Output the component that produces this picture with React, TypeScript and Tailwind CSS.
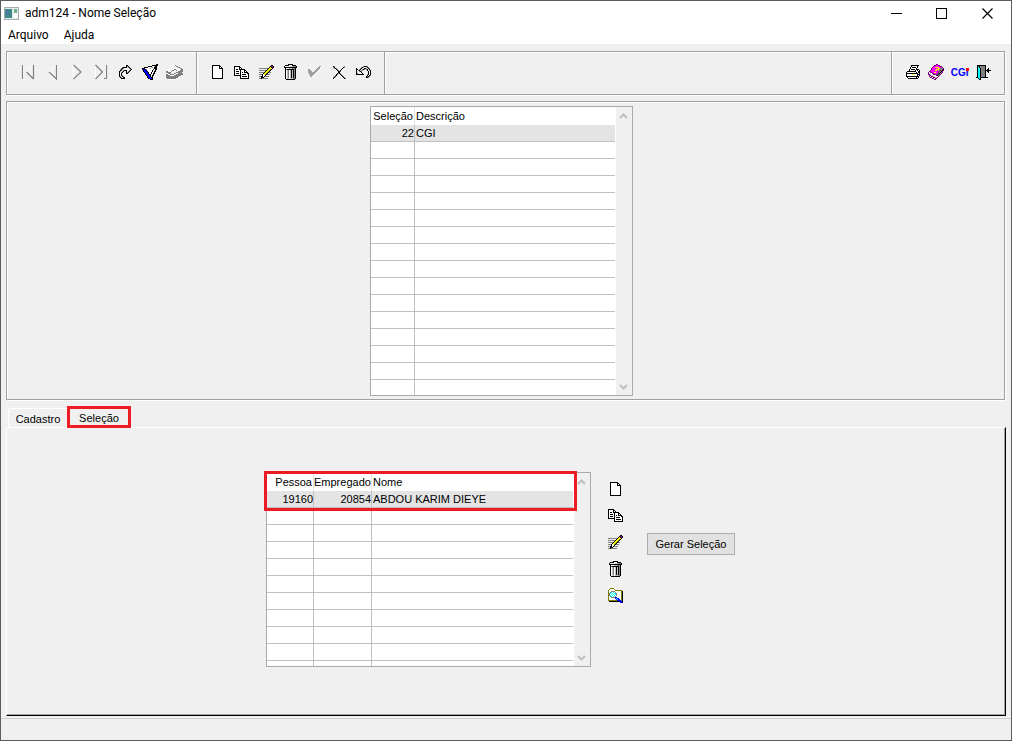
import clsx from 'clsx';
import { ReactNode } from 'react';

const palette: Record<string, string> = {
  K: '#000000',
  W: '#ffffff',
  G: '#808080',
  S: '#a0a0a0',
  L: '#c0c0c0',
  Y: '#ffff00',
  O: '#808000',
  M: '#ff00ff',
  P: '#800080',
  C: '#00ffff',
  B: '#0000ff',
  N: '#000080',
  T: '#008080',
  R: '#ff0000',
};

const newIcon = [
  'KKKKKKKK...',
  'KWWWWWWKK..',
  'KWWWWWWKWK.',
  'KWWWWWWKKKK',
  'KWWWWWWWWWK',
  'KWWWWWWWWWK',
  'KWWWWWWWWWK',
  'KWWWWWWWWWK',
  'KWWWWWWWWWK',
  'KWWWWWWWWWK',
  'KWWWWWWWWWK',
  'KWWWWWWWWWK',
  'KWWWWWWWWWK',
  'KKKKKKKKKKK',
];

const copyIcon = [
  'KKKKKK.........',
  'KWWWWKK........',
  'KWWWWKWK.......',
  'KWKKWKKKKKK....',
  'KWWWWWKWWWKK...',
  'KWKKKWKWWWKWK..',
  'KWWWWWKWKWKKKK.',
  'KWKKKWKWWWWWWKK',
  'KWWWWWKWKKKKWWK',
  'KKKKKKKWWWWWWWK',
  '......KWKKKKKWK',
  '......KWWWWWWWK',
  '......KKKKKKKKK',
];

const editIcon = [
  '............KK.',
  '...........KPPK',
  '..........KYKPK',
  'GGGGGGGGGKYYYK.',
  '........KYYOK..',
  'GGGGGGGKYYOK...',
  '......KYYOK....',
  'GGGGGKYYOKGG...',
  '....KYYOK......',
  'GGGKWYOKGGG....',
  '...KWWK........',
  'GGKKWKGGGG.....',
  '..KKK..........',
  'GGKGGGGGG......',
];

const trashIcon = [
  '....KKKKK....',
  '.KKKKWWWKKKK.',
  'KWWWWWLLLGGGK',
  'KKKKKKKKKKKKK',
  '.KWWWLLLGGGK.',
  '.KGKKKKKKKGK.',
  '.KWLGWLKLKGK.',
  '.KWLGWLKLKGK.',
  '.KWLGWLKLKGK.',
  '.KWLGWLKLKGK.',
  '.KWLGWLKLKGK.',
  '.KWLGWLKLKGK.',
  '.KWLGWLKLKGK.',
  '.KWLGWLKLKGK.',
  '.KWLLWLLLGGK.',
  '..KKKKKKKKK..',
];

const confirmIcon = [
  '...........SSW',
  '..........SSW.',
  '.........SSSW.',
  'SS......SSSW..',
  'SSS....SSSW...',
  'SSSS..SSSW....',
  'SSSSSSSSW.....',
  '.SSSSSSW......',
  '.SSSSSW.......',
  '..SSSW........',
  '..SSW.........',
  '...W..........',
];

const cancelIcon = [
  'KG.........G.',
  'GK........KG.',
  '.GKG.....K...',
  '...KG...K....',
  '....KG.K.....',
  '.....KKG.....',
  '.....KK......',
  '....KGKG.....',
  '...KG..KG....',
  '..GK....KG...',
  '.GK......KG..',
  'GK........KG.',
  'K..........KG',
];

const undoIcon = [
  '.......GKKKG...',
  '.....GKG...KG..',
  'K...GK..KKG.KG.',
  'KK.GK.GKG.GK.K.',
  'K.GK.GG....K.GK',
  'K..GKG......K.K',
  'K....K......K.K',
  'KG....K.....K.K',
  'KKKKKKKK...GK.K',
  '...........K.KG',
  '..........KGKG.',
  '..........KKG..',
];

const redoIcon = [
  '.......KK.....',
  '.......KGK....',
  '...GKKKK.GK...',
  '..GKG.....GK..',
  '.GKG.......GK.',
  '.KG.GKKK..GK..',
  'KG.GK..K.GK...',
  'K.GK...KGK....',
  'K.K....KK.....',
  'K.K...........',
  'K.KG..........',
  'KG.KG.........',
  '.KG.KK........',
  '..KKKK........',
];

const filterIcon = [
  '..............KK',
  '..........KKKKKK',
  '......KKKKWWLKK.',
  '..KKKKWWWLGWKKK.',
  'KKKWWWWLLWWWKKK.',
  'KBBKGWWWWWWKWKK.',
  '.KBBKWWWWWKWLK..',
  '.KBBBKWWWWKWKK..',
  '..KBBBKWWKWLK...',
  '...KBBKWWKWKK...',
  '...KBBBKKWLK....',
  '....KBBBKWKK....',
  '.....KBBKLK.....',
  '.....KBBBKK.....',
  '......KBBBK.....',
  '........KKK.....',
];

const lookupIcon = [
  '........WG.......',
  '......WW..GG.....',
  '.....W......GG...',
  '...WW...WW....GG.',
  '..W...WWGGW....GG',
  '.W...WGG..GW..GGG',
  'GGW.WG......GGGGG',
  'GGGGG.....GGGGGGW',
  'WWGGG...GGWWGGGGG',
  'GGWWGGGGWWGGGGGGG',
  'GGGGWWWWGGGGGGGW.',
  'GGGGGGGGGGGGGW...',
  'GGGGGGGGGGGGW....',
  '.GGGGGGGGGW......',
  '..WWWWWWWW.......',
];

const printIcon = [
  '.....KKKKKKKK.',
  '.....KWWWWWK..',
  '....KWKKKKWK..',
  '....KWWWWWK...',
  '...KWKKKKWKKK.',
  '...KWWWWWKWKWK',
  '.KKKKKKKKKWWKK',
  'KWWWWWWWWWKWKK',
  'KKKKKKKKKKKKWK',
  'KWWWWWYYWWWKKK',
  'KWWWWWWWWWWKWK',
  'KKKKKKKKKKKKK.',
  '.KWWWWWWWWKWK.',
  '..KKKKKKKKKK..',
];

const helpIcon = [
  '........PP......',
  '......PPMMPP....',
  '.....PMMMMMMPP..',
  '....PMMYYYYMMGP.',
  '...PMMMMMMYYGGGP',
  '...PMMMMYYYGGGPK',
  '..PMMMMYYMGGPGKP',
  '.PPMMMMMMMGPGKP.',
  'PWPPMMYYMMPGKGP.',
  'PWWWPPMMMPGKGP..',
  'PPLWWPPPPGKGP...',
  '.PPLLWWWPKGP....',
  '.PWPPLLWWWP.....',
  '..PPWPPLLP......',
  '....PPWPP.......',
  '......PP........',
];

const exitIcon = [
  '.KKKKKKKKK.....',
  '.KTKGGGGGK.....',
  '.KCKGGGGGK.....',
  '.KCCKGGGGK..K..',
  '.KCCKGGGGK.KK..',
  '.KCCKGGGGKKKKKK',
  '.KCCKGGGGK.KK..',
  '.KCCKGGGGK..K..',
  '.KCCKGGGGK.....',
  '.KCCKGGGGK.....',
  '.KCCKGGGGK.....',
  '.KCCKGGGGK.....',
  'KKCCKKKKKKKK...',
  '..KCK..........',
  '...KK..........',
];

const searchIcon = [
  '..OOOO.........',
  '.OWWWWO........',
  'OWWWWWWOOOOOOO.',
  'OWWGGGGWWWWWWOK',
  'OWGCWCWGWWWWWOK',
  'OGCWCWCCGWWWWOK',
  'OGWCWCWCGWWWWOK',
  'OGCWCWCWGWWWWOK',
  'OWGCWCWGWWWWWOK',
  'OWWGGGGBBWWWWOK',
  'OWWWWWWBCBBWWOK',
  'OWWWWWWWBCBBWOK',
  'OOOOOOOOOBBBBOK',
  '.KKKKKKKKKKBBBK',
  '............BBN',
];

function PixelIcon({ rows }: { rows: string[] }) {
  const width = Math.max(...rows.map((x) => x.length));
  return (
    <svg
      className="shrink-0"
      width={width}
      height={rows.length}
      viewBox={`0 0 ${width} ${rows.length}`}
      shapeRendering="crispEdges"
      aria-hidden="true"
    >
      {rows.map((row, y) =>
        row
          .split('')
          .map((c, x) =>
            palette[c] ? (
              <rect
                key={`${x}-${y}`}
                x={x}
                y={y}
                width="1"
                height="1"
                fill={palette[c]}
              />
            ) : null,
          ),
      )}
    </svg>
  );
}

// Gray arrow with a white edge, as disabled toolbar buttons have
function NavIcon({ gray, white }: { gray: string; white: string }) {
  return (
    <svg width="14" height="16" viewBox="0 0 14 16" fill="none">
      <path d={white} stroke="#ffffff" />
      <path d={gray} stroke="#808080" strokeWidth="1.2" />
    </svg>
  );
}

function ToolButton({
  label,
  disabled,
  className,
  children,
}: {
  label: string;
  disabled?: boolean;
  className?: string;
  children: ReactNode;
}) {
  return (
    <button
      type="button"
      aria-label={label}
      disabled={disabled}
      className={clsx('flex items-center justify-center', className ?? 'h-6')}
    >
      {children}
    </button>
  );
}

function ScrollBar() {
  return (
    <div className="flex w-4 shrink-0 flex-col items-center justify-between bg-[#f0f0f0] py-1 pr-[2px]">
      <button type="button" aria-label="Rolar para cima">
        <svg width="9" height="9" viewBox="0 0 9 9" fill="none">
          <path d="M1 7L4.500 3.500L8 7" stroke="#bfbfbf" strokeWidth="2" />
        </svg>
      </button>
      <button type="button" aria-label="Rolar para baixo">
        <svg width="9" height="9" viewBox="0 0 9 9" fill="none">
          <path d="M1 3L4.500 6.500L8 3" stroke="#bfbfbf" strokeWidth="2" />
        </svg>
      </button>
    </div>
  );
}

interface IColumn {
  title: string;
  width?: number;
  numeric?: boolean;
}

function DataGrid({
  columns,
  row,
  blankRows,
  className,
}: {
  columns: IColumn[];
  row: string[];
  blankRows: number;
  className?: string;
}) {
  const last = columns.length - 1;
  return (
    <div
      className={clsx(
        'flex overflow-hidden border border-[#a9a9b0] bg-white',
        className,
      )}
    >
      <div className="mr-px min-w-0 flex-1 overflow-hidden">
        <table className="w-full table-fixed border-separate border-spacing-0">
          <colgroup>
            {columns.map((x) => (
              <col key={x.title} style={{ width: x.width }} />
            ))}
          </colgroup>
          <thead>
            <tr>
              {columns.map((x, i) => (
                <th
                  key={x.title}
                  className={clsx(
                    'h-[18px] p-0 text-left leading-4 font-normal whitespace-nowrap',
                    x.numeric && 'pr-px text-right',
                    i < last && 'border-r border-[#e4e4e4]',
                    i === last && 'pl-px',
                  )}
                >
                  {x.title}
                </th>
              ))}
            </tr>
          </thead>
          <tbody>
            <tr className="bg-[#e4e4e4]">
              {row.map((x, i) => (
                <td
                  key={x}
                  className={clsx(
                    'h-[17px] border-b border-[#c0c0c0] p-0 leading-4 whitespace-nowrap',
                    columns[i].numeric && 'text-right',
                    i < last ? 'border-r' : 'pl-px',
                  )}
                >
                  {x}
                </td>
              ))}
            </tr>
            {Array.from({ length: blankRows }, (_, r) => (
              <tr key={r}>
                {columns.map((x, i) => (
                  <td
                    key={x.title}
                    className={clsx(
                      'h-[17px] border-b border-[#c0c0c0] p-0',
                      i < last && 'border-r',
                    )}
                  />
                ))}
              </tr>
            ))}
          </tbody>
        </table>
      </div>
      <ScrollBar />
    </div>
  );
}

function TitleBar() {
  return (
    <header className="bg-white font-[Roboto,sans-serif] text-[12px]">
      <div className="flex h-6 items-center pr-px pl-[3px]">
        <svg width="15" height="13" viewBox="0 0 15 13" aria-hidden="true">
          <rect width="15" height="13" fill="#a4acb0" />
          <rect x="1" y="1" width="13" height="11" fill="#e8eef0" />
          <rect x="1" y="2" width="7" height="9" fill="#3f8a84" />
          <rect x="2" y="3" width="3" height="5" fill="#4b78a8" />
          <rect x="10" y="2" width="3" height="4" fill="#6fae8e" />
          <rect x="10" y="6" width="3" height="5" fill="#ffffff" />
        </svg>
        <h1 className="ml-[6px] flex-1">adm124 - Nome Seleção</h1>
        <button
          type="button"
          aria-label="Minimizar"
          className="flex h-6 w-[45px] items-center justify-center"
        >
          <svg width="11" height="11" viewBox="0 0 11 11">
            <path d="M0 5.500H11" stroke="#000" />
          </svg>
        </button>
        <button
          type="button"
          aria-label="Maximizar"
          className="flex h-6 w-[45px] items-center justify-center"
        >
          <svg width="11" height="11" viewBox="0 0 11 11" fill="none">
            <rect x="0.500" y="0.500" width="10" height="10" stroke="#000" />
          </svg>
        </button>
        <button
          type="button"
          aria-label="Fechar"
          className="flex h-6 w-[46px] items-center justify-center"
        >
          <svg width="11" height="11" viewBox="0 0 11 11">
            <path
              d="M0.500 0.500L10.500 10.500M10.500 0.500L0.500 10.500"
              stroke="#000"
              strokeWidth="1.2"
            />
          </svg>
        </button>
      </div>
      <nav className="flex h-[19px] items-end gap-[15px] pl-[7px]">
        <button type="button">Arquivo</button>
        <button type="button">Ajuda</button>
      </nav>
    </header>
  );
}

function Toolbar() {
  return (
    <div
      role="toolbar"
      className="flex h-11 border border-[#a0a0a0] shadow-[1px_1px_0_#fff,inset_1px_1px_0_#fff]"
    >
      <div className="grid w-[190px] grid-cols-7 items-center border-r border-[#a0a0a0] px-[9px] pb-[2px]">
        <ToolButton label="Primeiro" disabled>
          <NavIcon
            gray="M1.500 1V15M12.500 1V15M12.500 15L5.500 8"
            white="M2.500 1V15M5.500 8L12.500 1M0 15.500H4"
          />
        </ToolButton>
        <ToolButton label="Anterior" disabled>
          <NavIcon
            gray="M10.500 1V15L3 8"
            white="M3 8L10.500 1M11.500 1V15"
          />
        </ToolButton>
        <ToolButton label="Próximo" disabled>
          <NavIcon
            gray="M3.500 1L11 8L3.500 15"
            white="M3.500 2V15M4.500 15.500L12 8"
          />
        </ToolButton>
        <ToolButton label="Último" disabled>
          <NavIcon
            gray="M1.500 1L8.500 8L1.500 15M12.500 1V15M10 14.500H12"
            white="M1.500 3V14M2.500 15.500L9.500 8M11.500 1V14"
          />
        </ToolButton>
        <ToolButton label="Ir para">
          <PixelIcon rows={redoIcon} />
        </ToolButton>
        <ToolButton label="Filtrar">
          <PixelIcon rows={filterIcon} />
        </ToolButton>
        <ToolButton label="Consultar" disabled>
          <PixelIcon rows={lookupIcon} />
        </ToolButton>
      </div>
      <div className="grid w-[188px] grid-cols-7 items-center border-r border-[#a0a0a0] px-2 pb-[2px] shadow-[inset_1px_0_0_#fff]">
        <ToolButton label="Novo">
          <PixelIcon rows={newIcon} />
        </ToolButton>
        <ToolButton label="Copiar">
          <PixelIcon rows={copyIcon} />
        </ToolButton>
        <ToolButton label="Alterar">
          <PixelIcon rows={editIcon} />
        </ToolButton>
        <ToolButton label="Excluir">
          <PixelIcon rows={trashIcon} />
        </ToolButton>
        <ToolButton label="Confirmar" disabled>
          <PixelIcon rows={confirmIcon} />
        </ToolButton>
        <ToolButton label="Cancelar">
          <PixelIcon rows={cancelIcon} />
        </ToolButton>
        <ToolButton label="Desfazer">
          <PixelIcon rows={undoIcon} />
        </ToolButton>
      </div>
      <div className="flex-1 shadow-[inset_1px_0_0_#fff]" />
      <div className="grid w-[113px] grid-cols-4 items-center border-l border-[#a0a0a0] px-[9px] pb-[2px] shadow-[inset_1px_0_0_#fff]">
        <ToolButton label="Imprimir">
          <PixelIcon rows={printIcon} />
        </ToolButton>
        <ToolButton label="Ajuda">
          <PixelIcon rows={helpIcon} />
        </ToolButton>
        <ToolButton label="CGi">
          <span className="relative text-[10px] font-black text-[#0000ff]">
            CGi
            <i className="absolute top-[3px] right-0 size-[3px] bg-[#ff0000]" />
          </span>
        </ToolButton>
        <ToolButton label="Sair">
          <PixelIcon rows={exitIcon} />
        </ToolButton>
      </div>
    </div>
  );
}

export default function App() {
  return (
    <div className="flex min-h-screen flex-col border border-[#5c5c5c] bg-[#f0f0f0] font-['Liberation_Sans',Arial,sans-serif] text-[11px] text-black">
      <TitleBar />
      <main className="flex flex-1 flex-col pt-[7px] pr-[6px] pb-[2px] pl-[5px]">
        <Toolbar />
        <section className="mt-[6px] flex justify-center border border-[#a0a0a0] pt-1 pr-2 pb-[3px] shadow-[1px_1px_0_#fff,inset_1px_1px_0_#fff]">
          <DataGrid
            className="h-[290px] w-[263px]"
            columns={[
              { title: 'Seleção', width: 44, numeric: true },
              { title: 'Descrição' },
            ]}
            row={['22', 'CGI']}
            blankRows={15}
          />
        </section>
        <div role="tablist" className="mt-[6px] flex h-[21px] items-end pl-[2px]">
          <button
            type="button"
            role="tab"
            aria-selected="false"
            className="h-[19px] w-[59px] rounded-tl-[3px] border-t border-l border-white pt-[2px]"
          >
            Cadastro
          </button>
          <button
            type="button"
            role="tab"
            aria-selected="true"
            className="relative z-10 -mb-px h-[22px] w-16 border-[3px] border-[#ed1c24] pt-px"
          >
            Seleção
          </button>
        </div>
        <section
          role="tabpanel"
          className="-mr-px flex flex-1 items-start justify-center border border-t-white border-r-black border-b-black border-l-white pt-11 pr-[11px] pb-[47px] shadow-[inset_-1px_-1px_0_#a0a0a0]"
        >
          <div className="relative">
            <DataGrid
              className="h-[195px] w-[325px]"
              columns={[
                { title: 'Pessoa', width: 47, numeric: true },
                { title: 'Empregado', width: 58, numeric: true },
                { title: 'Nome' },
              ]}
              row={['19160', '20854', 'ABDOU KARIM DIEYE']}
              blankRows={11}
            />
            <div className="pointer-events-none absolute -top-px -left-[2px] h-10 w-[313px] border-[3px] border-[#ed1c24]" />
          </div>
          <div className="mt-1 ml-4 flex h-[133px] w-4 flex-col">
            <ToolButton label="Novo item" className="flex-1">
              <PixelIcon rows={newIcon} />
            </ToolButton>
            <ToolButton label="Copiar item" className="flex-1">
              <PixelIcon rows={copyIcon} />
            </ToolButton>
            <ToolButton label="Alterar item" className="flex-1">
              <PixelIcon rows={editIcon} />
            </ToolButton>
            <ToolButton label="Excluir item" className="flex-1">
              <PixelIcon rows={trashIcon} />
            </ToolButton>
            <ToolButton label="Pesquisar item" className="flex-1">
              <PixelIcon rows={searchIcon} />
            </ToolButton>
          </div>
          <button
            type="button"
            className="mt-[61px] ml-6 h-[22px] w-[88px] border border-[#adadad] bg-[#e1e1e1]"
          >
            Gerar Seleção
          </button>
        </section>
      </main>
      <footer className="h-[22px] border-t border-[#d0d0d0]" />
    </div>
  );
}
